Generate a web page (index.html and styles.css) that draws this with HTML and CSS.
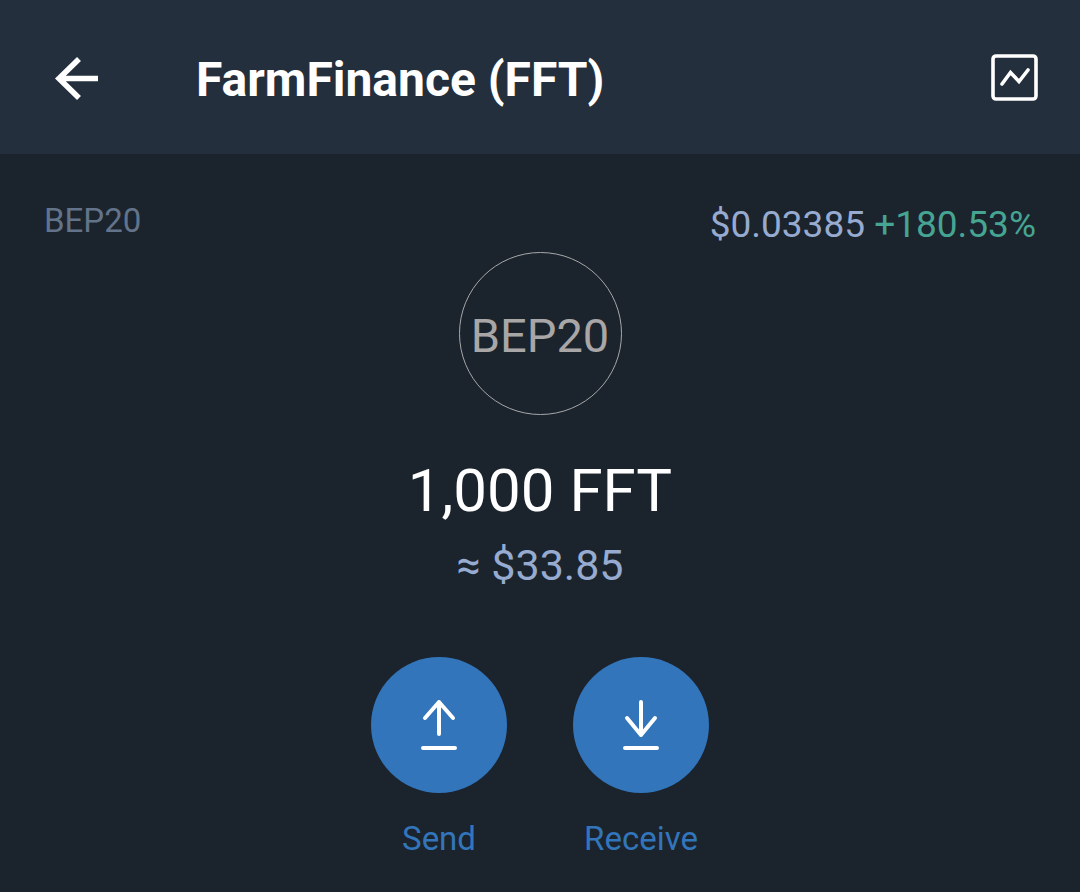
FILE: index.html
```html
<!DOCTYPE html>
<html lang="en">
<head>
<meta charset="utf-8">
<meta name="viewport" content="width=device-width, initial-scale=1">
<title>FarmFinance (FFT)</title>
<link rel="stylesheet" href="styles.css">
</head>
<body>
<header class="topbar">
  <button class="icon-button" type="button" aria-label="Back">
    <svg width="48" height="48" viewBox="0 0 48 48" fill="none" stroke="currentColor" stroke-width="5.6"><path d="M46 24.500H7M27 5L7 24.500L27 44"/></svg>
  </button>
  <h1 class="title">FarmFinance (FFT)</h1>
  <button class="icon-button" type="button" aria-label="Price chart">
    <svg width="48" height="48" viewBox="0 0 48 48" fill="none" stroke="currentColor" stroke-width="3.600"><rect x="3" y="2" width="43" height="43" rx="3"/><path d="M12 30L20.500 18.500L29 27.500L38 16" stroke-linecap="round"/></svg>
  </button>
</header>
<main class="asset">
  <div class="market">
    <span class="network">BEP20</span>
    <span class="price">$0.03385 <span class="change">+180.53%</span></span>
  </div>
  <div class="token-logo">BEP20</div>
  <p class="amount">1,000 FFT</p>
  <p class="fiat">≈ $33.85</p>
  <div class="actions">
    <button class="action" type="button">
      <span class="action-disc">
        <svg width="56" height="56" viewBox="0 0 56 56" fill="none" stroke="currentColor" stroke-width="4" stroke-linecap="round" stroke-linejoin="round"><path d="M28 37V5M14 21L28 5L42 21M12 51H44"/></svg>
      </span>
      <span class="action-label">Send</span>
    </button>
    <button class="action" type="button">
      <span class="action-disc">
        <svg width="56" height="56" viewBox="0 0 56 56" fill="none" stroke="currentColor" stroke-width="4" stroke-linecap="round" stroke-linejoin="round"><path d="M28 5V38M14 21L28 38L42 21M12 51H44"/></svg>
      </span>
      <span class="action-label">Receive</span>
    </button>
  </div>
</main>
</body>
</html>
```
FILE: styles.css
```css
* {
  box-sizing: border-box;
}

body {
  margin: 0;
  background: #1b232d;
  color: #fff;
  font-family: Roboto, "Liberation Sans", sans-serif;
}

button {
  padding: 0;
  border: 0;
  background: none;
  color: inherit;
  font: inherit;
  cursor: pointer;
}

svg {
  display: block;
}

.topbar {
  display: flex;
  align-items: center;
  padding: 46px 42px 44px 52px;
  background: #242f3d;
}

.icon-button {
  flex: none;
}

.title {
  flex: 1;
  margin: 0 0 0 96px;
  padding-top: 4px;
  font-size: 48px;
  line-height: 60px;
  font-weight: 700;
}

.asset {
  display: flex;
  flex-direction: column;
  align-items: center;
  padding: 44px 44px 32px;
  border-bottom: 4px solid #18202a;
}

.market {
  align-self: stretch;
  display: flex;
  justify-content: space-between;
}

.network {
  color: #62738a;
  font-size: 33px;
  line-height: 46px;
}

.price {
  color: #96abcf;
  font-size: 37px;
  line-height: 54px;
}

.change {
  color: #46a592;
}

.token-logo {
  display: grid;
  place-items: center;
  width: 163px;
  height: 163px;
  padding-top: 4px;
  border: 1px solid #a8a8a8;
  border-radius: 50%;
  color: #a8a6a6;
  font-size: 47px;
}

.amount {
  margin: 40px 0 0;
  font-size: 60px;
  line-height: 72px;
}

.fiat {
  margin: 12px 0 0;
  color: #96abcf;
  font-size: 43px;
  line-height: 52px;
}

.actions {
  display: flex;
  gap: 66px;
  margin-top: 66px;
}

.action {
  display: flex;
  flex-direction: column;
  align-items: center;
  gap: 24px;
  width: 136px;
}

.action-disc {
  display: grid;
  place-items: center;
  width: 136px;
  height: 136px;
  border-radius: 50%;
  background: #3275bb;
}

.action-label {
  color: #3275bb;
  font-size: 33px;
  line-height: 44px;
}
```
